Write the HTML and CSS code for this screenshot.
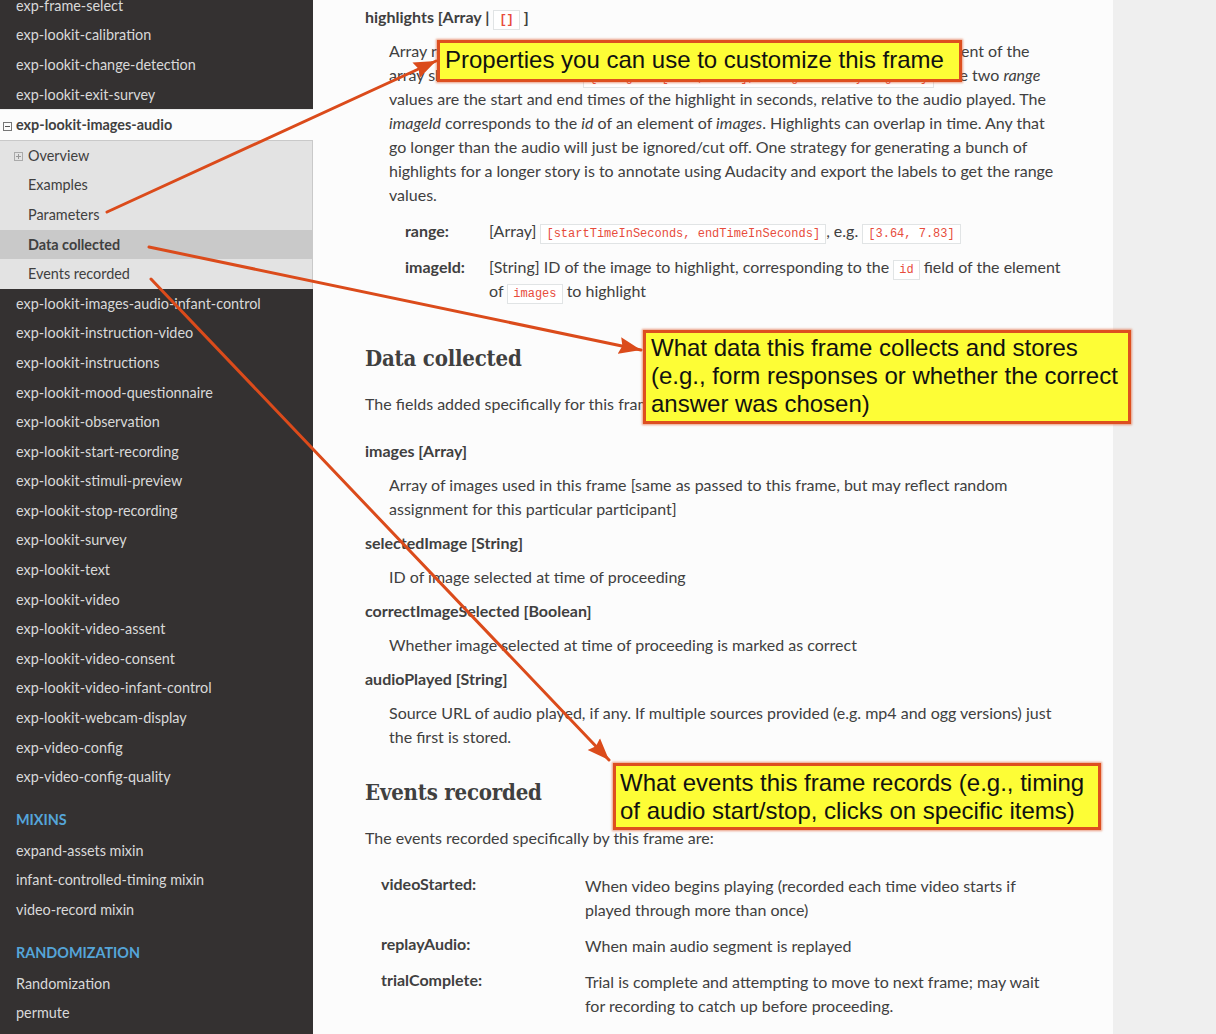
FILE: index.html
```html
<!DOCTYPE html>
<html lang="en">
<head>
<meta charset="utf-8">
<title>exp-lookit-images-audio</title>
<link rel="stylesheet" href="styles.css">
</head>
<body>
<div class="page">
  <nav class="sidebar">
    <ul class="menu menu-scrolled">
      <li><a>exp-frame-select</a></li>
      <li><a>exp-lookit-calibration</a></li>
      <li><a>exp-lookit-change-detection</a></li>
      <li><a>exp-lookit-exit-survey</a></li>
      <li class="current">
        <a class="cur-l1"><svg class="toggle" width="9" height="9" viewBox="0 0 9 9"><rect x="0.5" y="0.5" width="8" height="8" fill="none" stroke="#777"/><path d="M2 4.5H7" stroke="#555"/></svg>exp-lookit-images-audio</a>
        <ul class="sub">
          <li><a class="has-toggle"><svg class="toggle toggle-light" width="9" height="9" viewBox="0 0 9 9"><rect x="0.5" y="0.5" width="8" height="8" fill="none" stroke="#aaa"/><path d="M2 4.5H7M4.5 2V7" stroke="#999"/></svg>Overview</a></li>
          <li><a>Examples</a></li>
          <li><a>Parameters</a></li>
          <li class="active"><a>Data collected</a></li>
          <li><a>Events recorded</a></li>
        </ul>
      </li>
      <li><a>exp-lookit-images-audio-infant-control</a></li>
      <li><a>exp-lookit-instruction-video</a></li>
      <li><a>exp-lookit-instructions</a></li>
      <li><a>exp-lookit-mood-questionnaire</a></li>
      <li><a>exp-lookit-observation</a></li>
      <li><a>exp-lookit-start-recording</a></li>
      <li><a>exp-lookit-stimuli-preview</a></li>
      <li><a>exp-lookit-stop-recording</a></li>
      <li><a>exp-lookit-survey</a></li>
      <li><a>exp-lookit-text</a></li>
      <li><a>exp-lookit-video</a></li>
      <li><a>exp-lookit-video-assent</a></li>
      <li><a>exp-lookit-video-consent</a></li>
      <li><a>exp-lookit-video-infant-control</a></li>
      <li><a>exp-lookit-webcam-display</a></li>
      <li><a>exp-video-config</a></li>
      <li><a>exp-video-config-quality</a></li>
    </ul>
    <p class="caption">Mixins</p>
    <ul class="menu">
      <li><a>expand-assets mixin</a></li>
      <li><a>infant-controlled-timing mixin</a></li>
      <li><a>video-record mixin</a></li>
    </ul>
    <p class="caption">Randomization</p>
    <ul class="menu">
      <li><a>Randomization</a></li>
      <li><a>permute</a></li>
    </ul>
  </nav>

  <main class="content">
    <dl class="field">
      <dt>highlights [Array | <code>[]</code> ]</dt>
      <dd class="with-opts">
        <p>Array representing times when particular images should be highlighted. Each element of the array should be of the form <code>{'range': [3.64, 7.83], 'imageId': 'myImageId'}</code>. The two <em>range</em> values are the start and end times of the highlight in seconds, relative to the audio played. The <em>imageId</em> corresponds to the <em>id</em> of an element of <em>images</em>. Highlights can overlap in time. Any that go longer than the audio will just be ignored/cut off. One strategy for generating a bunch of highlights for a longer story is to annotate using Audacity and export the labels to get the range values.</p>
        <dl class="opts">
          <dt>range:</dt>
          <dd>[Array] <code>[startTimeInSeconds, endTimeInSeconds]</code>, e.g. <code>[3.64, 7.83]</code></dd>
          <dt>imageId:</dt>
          <dd>[String] ID of the image to highlight, corresponding to the <code>id</code> field of the element of <code>images</code> to highlight</dd>
        </dl>
      </dd>
    </dl>

    <h2>Data collected</h2>
    <p class="intro">The fields added specifically for this frame are:</p>
    <dl class="field">
      <dt>images [Array]</dt>
      <dd>Array of images used in this frame [same as passed to this frame, but may reflect random assignment for this particular participant]</dd>
      <dt>selectedImage [String]</dt>
      <dd>ID of image selected at time of proceeding</dd>
      <dt>correctImageSelected [Boolean]</dt>
      <dd>Whether image selected at time of proceeding is marked as correct</dd>
      <dt>audioPlayed [String]</dt>
      <dd>Source URL of audio played, if any. If multiple sources provided (e.g. mp4 and ogg versions) just the first is stored.</dd>
    </dl>

    <h2>Events recorded</h2>
    <p class="intro intro-events">The events recorded specifically by this frame are:</p>
    <dl class="events">
      <dt>videoStarted:</dt>
      <dd>When video begins playing (recorded each time video starts if played through more than once)</dd>
      <dt>replayAudio:</dt>
      <dd>When main audio segment is replayed</dd>
      <dt>trialComplete:</dt>
      <dd>Trial is complete and attempting to move to next frame; may wait for recording to catch up before proceeding.</dd>
      <dt>finishAudio:</dt>
      <dd>When main audio segment finishes playing</dd>
    </dl>
  </main>
  <div class="gutter"></div>
</div>

<div class="note note-props">Properties you can use to customize this frame</div>
<div class="note note-data">What data this frame collects and stores (e.g., form responses or whether the correct answer was chosen)</div>
<div class="note note-events">What events this frame records (e.g., timing of audio start/stop, clicks on specific items)</div>

<svg class="arrows" width="1216" height="1034" viewBox="0 0 1216 1034">
  <defs>
    <marker id="head" markerUnits="userSpaceOnUse" markerWidth="24" markerHeight="20" refX="22" refY="10" orient="auto">
      <path d="M0,1.5 L22,10 L0,18.5 L3,10 Z" fill="#db4b1b"/>
    </marker>
  </defs>
  <line x1="107" y1="212" x2="436" y2="61" class="arrow"/>
  <line x1="149" y1="247" x2="641" y2="350" class="arrow"/>
  <line x1="151" y1="279" x2="609" y2="760" class="arrow"/>
</svg>
</body>
</html>
```

FILE: styles.css
```css
html, body {
  margin: 0;
  padding: 0;
}

body {
  position: relative;
  width: 1216px;
  height: 1034px;
  overflow: hidden;
  background: #efefef;
  color: #404040;
  font-family: Lato, "Noto Sans", "Liberation Sans", sans-serif;
}

.page {
  display: flex;
  height: 1034px;
}

/* ---------- sidebar ---------- */
.sidebar {
  flex: none;
  width: 313px;
  background: #343131;
  font-size: 14.4px;
  overflow: hidden;
}

.menu {
  list-style: none;
  margin: 0;
  padding: 0;
}

.menu-scrolled {
  margin-top: -9px;
}

.menu a {
  display: block;
  padding: 5.8px 16px;
  line-height: 18px;
  color: #d9d9d9;
  text-decoration: none;
  white-space: nowrap;
}

.toggle {
  display: inline-block;
  vertical-align: -0.5px;
  margin-right: 4px;
}

.menu .cur-l1 {
  background: #fcfcfc;
  color: #404040;
  font-weight: 700;
  padding-left: 3px;
  border-top: 1px solid #ececec;
  border-bottom: 1px solid #c9c9c9;
}

.sub {
  list-style: none;
  margin: 0;
  padding: 0;
}

.sub a {
  background: #e3e3e3;
  color: #404040;
  padding-left: 28px;
  border-right: 1px solid #c9c9c9;
}

.sub a.has-toggle {
  padding-left: 14px;
}

.sub .toggle {
  margin-right: 5px;
}

.sub .active a {
  background: #c9c9c9;
  font-weight: 700;
}

.caption {
  margin: 12px 0 0;
  padding: 0 16px;
  height: 32px;
  line-height: 32px;
  color: #55a5d9;
  font-weight: 700;
  text-transform: uppercase;
}

/* ---------- content ---------- */
.content {
  flex: none;
  width: 800px;
  box-sizing: border-box;
  padding: 5px 52px 0;
  background: #fcfcfc;
  font-size: 16px;
  line-height: 24px;
}

.gutter {
  flex: 1;
  background: #efefef;
}

.content p {
  margin: 0;
}

.field {
  margin: 0;
}

.field > dt {
  font-weight: 700;
}

.field > dd {
  margin: 0;
  padding: 10px 0 10px 24px;
}

code {
  font-family: "Liberation Mono", "DejaVu Sans Mono", monospace;
  font-size: 12px;
  line-height: 1;
  color: #e74c3c;
  background: #fff;
  border: 1px solid #e1e4e5;
  padding: 2px 5px;
}

.opts {
  display: grid;
  grid-template-columns: 84px 1fr;
  margin: 6px 0 6px 16px;
}

.opts dt,
.opts dd {
  margin: 0;
  padding: 6px 0;
}

.opts dt {
  font-weight: 700;
}

.content h2 {
  margin: 18.5px 0 19.5px;
  font-family: "DejaVu Serif Condensed", "DejaVu Serif", serif;
  font-stretch: condensed;
  font-size: 22px;
  line-height: 29px;
  font-weight: 700;
  color: #404040;
  letter-spacing: -0.2px;
}

.intro {
  margin-bottom: 23px !important;
}

.intro-events {
  margin-bottom: 18px !important;
}

.events {
  display: grid;
  grid-template-columns: 204px 1fr;
  margin: 0 0 0 16px;
}

.events dt,
.events dd {
  margin: 0;
  padding: 6px 0;
}

.events dt {
  font-weight: 700;
  position: relative;
  top: -2px;
}

/* ---------- annotations ---------- */
.note {
  position: absolute;
  box-sizing: border-box;
  background: #fdfd36;
  border: 3px solid #dd4f1f;
  box-shadow: 0 0 2px 1px rgba(221, 79, 31, 0.55);
  color: #111;
  font-family: "Liberation Sans", Arial, sans-serif;
  font-size: 24px;
  line-height: 28px;
}

.note-props {
  left: 437px;
  top: 40px;
  width: 525px;
  height: 42px;
  padding: 3px 4px 0 5px;
  white-space: nowrap;
}

.note-data {
  left: 643px;
  top: 330px;
  width: 488px;
  height: 94px;
  padding: 1px 4px 0 5px;
}

.note-events {
  left: 613px;
  top: 763px;
  width: 488px;
  height: 67px;
  padding: 3px 4px 0 4px;
}

.arrows {
  position: absolute;
  left: 0;
  top: 0;
  pointer-events: none;
}

.arrow {
  stroke: #db4b1b;
  stroke-width: 3;
  stroke-linecap: round;
  marker-end: url(#head);
}
```
